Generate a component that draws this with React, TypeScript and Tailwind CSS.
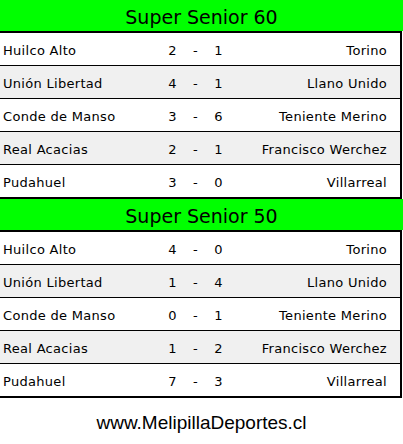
import React from "react";

type Match = [string, number, number, string];

const sections: { title: string; matches: Match[] }[] = [
  {
    title: "Super Senior 60",
    matches: [
      ["Huilco Alto", 2, 1, "Torino"],
      ["Unión Libertad", 4, 1, "Llano Unido"],
      ["Conde de Manso", 3, 6, "Teniente Merino"],
      ["Real Acacias", 2, 1, "Francisco Werchez"],
      ["Pudahuel", 3, 0, "Villarreal"],
    ],
  },
  {
    title: "Super Senior 50",
    matches: [
      ["Huilco Alto", 4, 0, "Torino"],
      ["Unión Libertad", 1, 4, "Llano Unido"],
      ["Conde de Manso", 0, 1, "Teniente Merino"],
      ["Real Acacias", 1, 2, "Francisco Werchez"],
      ["Pudahuel", 7, 3, "Villarreal"],
    ],
  },
];

export default function App() {
  return (
    <div className="w-[403px] h-[444px] bg-white text-black flex flex-col">
      {sections.map((s) => (
        <div key={s.title} className="flex flex-col">
          <div
            className="h-[31px] w-[403px] bg-[#00ff00] flex items-center justify-center text-[19px] leading-none pt-[4px]"
            style={{ fontFamily: '"DejaVu Sans", Verdana, sans-serif' }}
          >
            {s.title}
          </div>
          <div
            className="w-[402px] border-t-2 border-r-2 border-b-2 border-black flex flex-col text-[13px] tracking-[0.3px]"
            style={{ fontFamily: '"DejaVu Sans", Verdana, sans-serif' }}
          >
            {s.matches.map((m, i) => (
              <div
                key={i}
                className={`grid grid-cols-[161px_23px_23px_23px_1fr] items-center pt-[3px] ${
                  i % 2 === 1 ? "bg-[#f0f0f0]" : "bg-white"
                } ${i < s.matches.length - 1 ? "border-b border-black h-[33px]" : "h-[32px]"}`}
              >
                <span className="pl-[3px] whitespace-nowrap">{m[0]}</span>
                <span className="text-center">{m[1]}</span>
                <span className="text-center">-</span>
                <span className="text-center">{m[2]}</span>
                <span className="text-right pr-[13px] whitespace-nowrap">{m[3]}</span>
              </div>
            ))}
          </div>
        </div>
      ))}
      <div
        className="flex-1 flex items-center justify-center text-[19px] pt-[5px]"
        style={{ fontFamily: '"Liberation Sans", Arial, sans-serif' }}
      >
        www.MelipillaDeportes.cl
      </div>
    </div>
  );
}
